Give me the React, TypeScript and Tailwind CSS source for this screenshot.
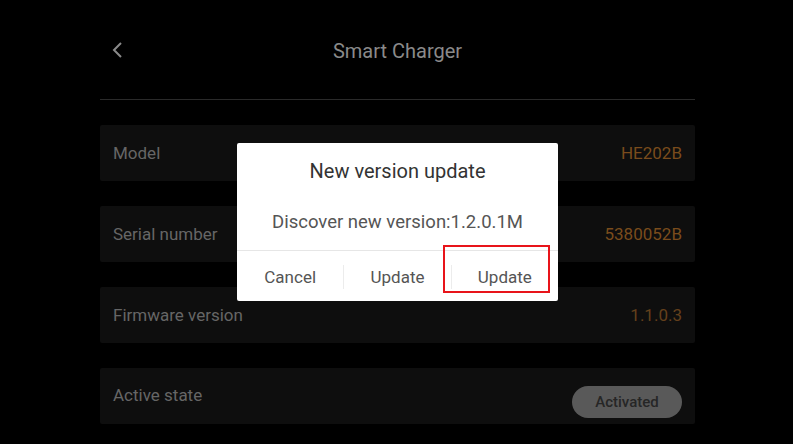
const rows = [
  { label: "Model", value: "HE202B", tone: "text-[#7a4c1c]" },
  { label: "Serial number", value: "5380052B", tone: "text-[#7a4c1c]" },
  { label: "Firmware version", value: "1.1.0.3", tone: "text-[#64401c]" },
];

export default function App() {
  return (
    <div
      className="relative w-[793px] h-[444px] overflow-hidden bg-black"
      style={{ fontFamily: "Roboto, 'Noto Sans', sans-serif" }}
    >
      <div className="w-[595px] ml-[100px]">
        <header className="relative h-[100px] flex items-center justify-center border-b border-[#2a2a2a]">
          <svg
            className="absolute left-[12px] top-[42px]"
            width="12"
            height="16"
            viewBox="0 0 12 16"
            fill="none"
          >
            <polyline points="9,1 2,8 9,15" stroke="#8a8a8a" strokeWidth="2" />
          </svg>
          <h1 className="mt-[2px] text-[20px] text-[#8a8a8a] leading-none">Smart Charger</h1>
        </header>

        <div className="mt-[25px] flex flex-col gap-[25px]">
          {rows.map((row) => (
            <div
              key={row.label}
              className="h-[56px] px-[13px] pt-[2px] flex items-center justify-between bg-[#0e0e0e] rounded-[2px]"
            >
              <span className="text-[17px] text-[#666666]">{row.label}</span>
              <span className={`text-[17px] ${row.tone}`}>{row.value}</span>
            </div>
          ))}
          <div className="h-[56px] px-[13px] flex items-center justify-between bg-[#0e0e0e] rounded-[2px]">
            <span className="text-[17px] text-[#666666]">Active state</span>
            <span className="mt-[12px] w-[110px] h-[32px] flex items-center justify-center rounded-full bg-[#595959] text-[15px] font-medium text-[#262626]">
              Activated
            </span>
          </div>
        </div>
      </div>

      <div className="absolute left-[237px] top-[143px] w-[321px] h-[158px] bg-white rounded-[2px] flex flex-col">
        <div className="h-[54px] pt-[2px] flex items-center justify-center text-[20px] text-[#333333]">
          New version update
        </div>
        <div className="h-[54px] pb-[2px] flex items-center justify-center text-[18.5px] text-[#555555] border-b border-[#e6e6e6]">
          Discover new version:1.2.0.1M
        </div>
        <div className="flex-1 pt-[3px] flex items-stretch">
          <div className="flex-1 flex items-center justify-center text-[17px] text-[#555555]">Cancel</div>
          <div className="w-px h-[24px] mt-[11px] bg-[#ececec]" />
          <div className="flex-1 flex items-center justify-center text-[17px] text-[#555555]">Update</div>
          <div className="w-px h-[24px] mt-[11px] bg-[#ececec]" />
          <div className="flex-1 flex items-center justify-center text-[17px] text-[#555555]">Update</div>
        </div>
        <div className="absolute left-[206px] top-[102px] w-[107px] h-[48px] border-2 border-[#e8141a]" />
      </div>
    </div>
  );
}
